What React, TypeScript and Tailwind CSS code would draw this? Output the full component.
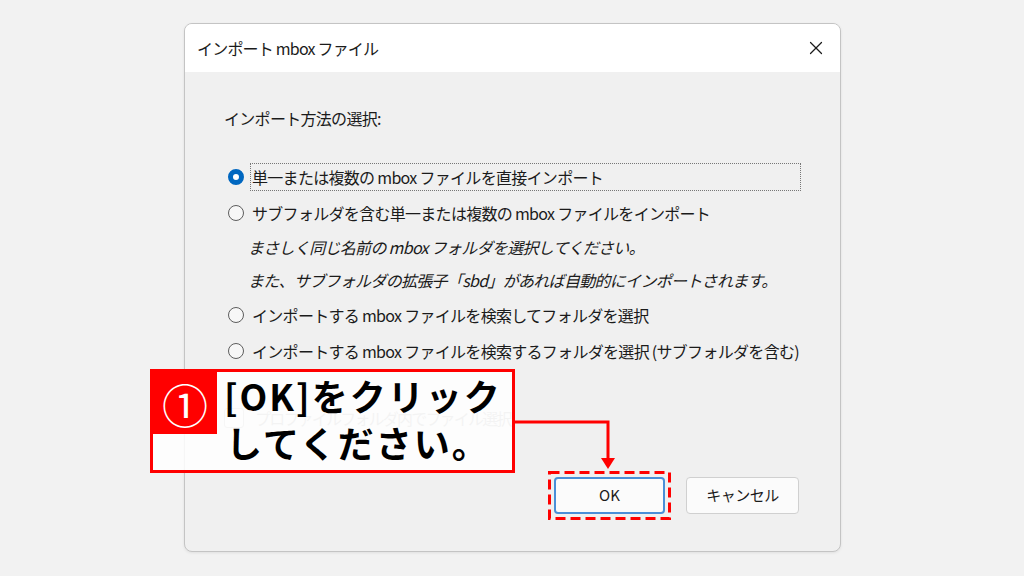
import { X } from "lucide-react";

const jp = "font-['Noto_Sans_CJK_JP','Noto_Sans',sans-serif]";

function Radio({ checked }: { checked?: boolean }) {
  if (checked) {
    return <span className="w-4 h-4 rounded-full border-[5px] border-[#0067c0] bg-white shrink-0" />;
  }
  return <span className="w-4 h-4 rounded-full border border-[#5d5d5d] bg-[#f7f7f7] shrink-0" />;
}

function Callout() {
  return (
    <div className="absolute left-[150px] top-[369px] w-[365px] h-[104px] border-[3px] border-[#ff0000] bg-white/85 flex">
      <div className="w-[64px] h-[62px] bg-[#ff0000] text-white text-[46px] leading-none flex items-center justify-center shrink-0">
        ①
      </div>
      <div className="pl-[7px] text-[36px] leading-[47px] font-bold text-black tracking-[2px]">
        <p>[OK]をクリック</p>
        <p className="pl-[2px]">してください。</p>
      </div>
    </div>
  );
}

export default function App() {
  return (
    <div className={`relative w-[1024px] h-[576px] overflow-hidden bg-[#f2f2f2] text-[#1b1b1b] ${jp}`}>
      <div className="pt-[23px] pl-[184px]">
        <div className="w-[657px] h-[529px] rounded-[8px] border border-[#c4c4c4] bg-[#f0f0f0] overflow-hidden flex flex-col shadow-[0_1px_3px_rgba(0,0,0,0.08)]">
          {/* title bar */}
          <div className="h-[48px] bg-white flex items-center justify-between pl-[12px] pr-[13px]">
            <span className="text-[16px] tracking-[-0.8px]">インポート mbox ファイル</span>
            <X size={22} strokeWidth={1.3} className="text-[#1b1b1b]" />
          </div>

          {/* body */}
          <div className="flex-1 pl-[39px] pt-[34px] text-[16px] tracking-[-0.7px]">
            <p className="h-[24px] leading-[24px]">インポート方法の選択:</p>

            <div className="mt-[29px]">
              <div className="h-[36px] flex items-center gap-[6px] pl-[4px]">
                <Radio checked />
                <span className="h-[28px] w-[551px] border border-dotted border-[#777] flex items-center pl-[1px]">
                  単一または複数の mbox ファイルを直接インポート
                </span>
              </div>
              <div className="h-[36px] flex items-center gap-[8px] pl-[4px]">
                <Radio />
                <span>サブフォルダを含む単一または複数の mbox ファイルをインポート</span>
              </div>
              <p className="h-[32px] leading-[32px] pl-[24px] italic">まさしく同じ名前の mbox フォルダを選択してください。</p>
              <p className="h-[34px] leading-[34px] pl-[24px] italic">
                また、サブフォルダの拡張子「sbd」があれば自動的にインポートされます。
              </p>
              <div className="h-[36px] flex items-center gap-[8px] pl-[4px]">
                <Radio />
                <span>インポートする mbox ファイルを検索してフォルダを選択</span>
              </div>
              <div className="h-[36px] flex items-center gap-[8px] pl-[4px]">
                <Radio />
                <span>インポートする mbox ファイルを検索するフォルダを選択 (サブフォルダを含む)</span>
              </div>
            </div>

            <div className="mt-[37px] h-[24px] flex items-center gap-[11px] text-[#b0b0b0]">
              <span className="w-[20px] h-[20px] rounded-[3px] border border-[#c4c4c4] bg-[#f5f5f5]" />
              <span className="tracking-[-1.8px]">プロファイルフォルダ内でファイル選択</span>
            </div>
          </div>

          {/* footer */}
          <div className="flex justify-end gap-[21px] pr-[41px] pb-[37px] text-[15px]">
            <div className="relative">
              <button className="w-[111px] h-[37px] rounded-[4px] border-2 border-[#4a8fd8] bg-[#fbfbfb]">OK</button>
              <svg className="absolute -left-[6px] -top-[6px]" width="123" height="49">
                <rect x="1.5" y="1.5" width="120" height="46" fill="none" stroke="#ff0000" strokeWidth="3" strokeDasharray="10 5" />
              </svg>
            </div>
            <button className="w-[113px] h-[37px] rounded-[4px] border border-[#d0d0d0] bg-[#fbfbfb] tracking-[-0.5px]">キャンセル</button>
          </div>
        </div>
      </div>

      <Callout />

      <svg className="absolute left-0 top-0 pointer-events-none" width="1024" height="576">
        <path d="M515 422 H608 V459" fill="none" stroke="#ff0000" strokeWidth="3" />
        <polygon points="601,458 615,458 608,469" fill="#ff0000" />
      </svg>
    </div>
  );
}
